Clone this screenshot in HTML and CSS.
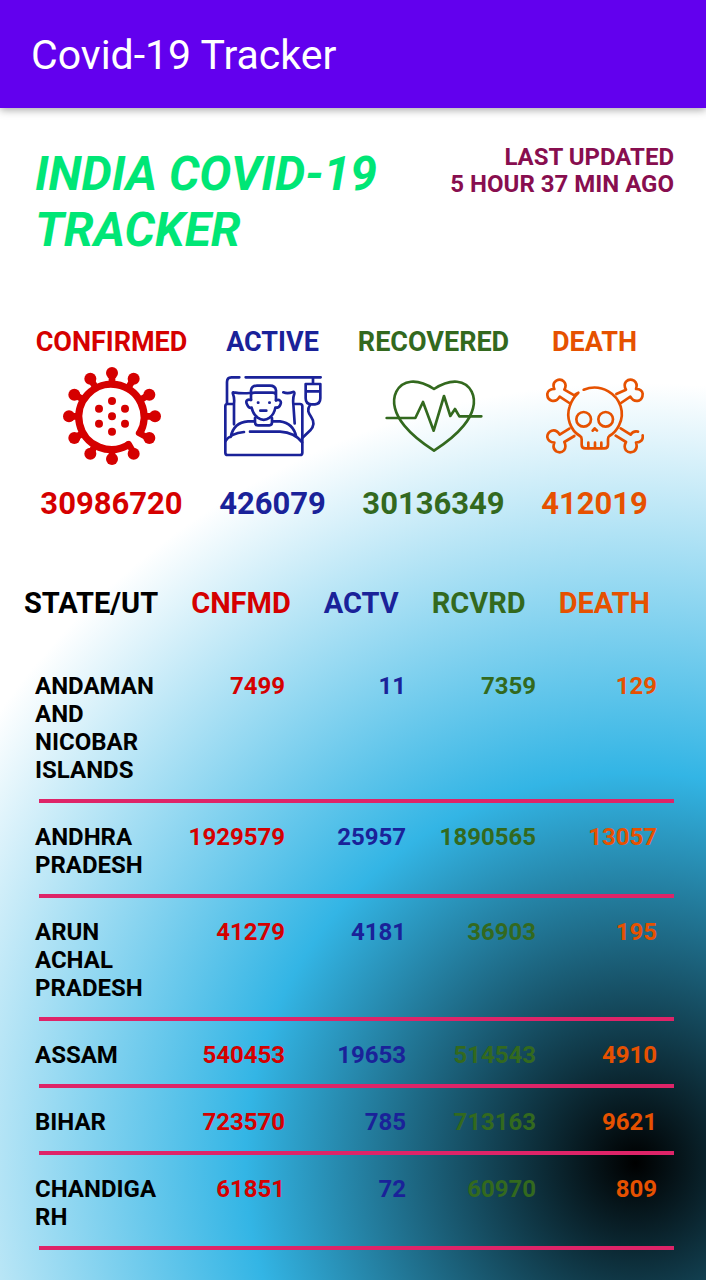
FILE: index.html
```html
<!DOCTYPE html>
<html lang="en">
<head>
<meta charset="utf-8">
<meta name="viewport" content="width=device-width, initial-scale=1">
<title>Covid-19 Tracker</title>
<link rel="stylesheet" href="styles.css">
</head>
<body>
<header class="app-bar">Covid-19 Tracker</header>
<main class="content">
  <div class="intro">
    <h1 class="title">INDIA COVID-19 TRACKER</h1>
    <p class="updated">LAST UPDATED<br>5 HOUR 37 MIN AGO</p>
  </div>

  <section class="stats">
    <div class="stat confirmed">
      <h2 class="stat-label">CONFIRMED</h2>
      <svg class="stat-icon" viewBox="39 36 294 294" aria-hidden="true">
        <g fill="currentColor">
          <circle cx="186" cy="54" r="18"/><circle cx="251" cy="71" r="18"/><circle cx="298" cy="119" r="18"/>
          <circle cx="315" cy="184" r="18"/><circle cx="298" cy="249" r="18"/><circle cx="251" cy="296" r="18"/>
          <circle cx="186" cy="312" r="18"/><circle cx="121" cy="296" r="18"/><circle cx="73" cy="249" r="18"/>
          <circle cx="57" cy="184" r="18"/><circle cx="73" cy="119" r="18"/><circle cx="121" cy="71" r="18"/>
          <circle cx="186" cy="138" r="12"/><circle cx="186" cy="184" r="12"/><circle cx="186" cy="230" r="12"/>
          <circle cx="147" cy="161" r="12"/><circle cx="225" cy="161" r="12"/>
          <circle cx="147" cy="206" r="12"/><circle cx="225" cy="206" r="12"/>
        </g>
        <g fill="none" stroke="currentColor">
          <path stroke-width="20" d="M186 60V90M248 76L235 98M293 122L272 134M308 184H280M186 308V278M124 291L137 269M79 246L100 234M64 184H92M79 122L100 134M124 76L137 98"/>
          <path stroke-width="22" d="M239 267A98 98 0 1 1 269 235"/>
          <path stroke-width="19" stroke-linecap="round" stroke-linejoin="round" d="M236 267L248 288M267 234L289 246"/>
        </g>
      </svg>
      <p class="stat-value">30986720</p>
    </div>
    <div class="stat active">
      <h2 class="stat-label">ACTIVE</h2>
      <svg class="stat-icon" viewBox="36 21 294 294" aria-hidden="true">
        <g fill="none" stroke="currentColor" stroke-width="8" stroke-linecap="round" stroke-linejoin="round">
          <path d="M82 52H58Q45 52 45 66V130M101 52H326M303 54V70"/>
          <path d="M62 132H46Q40 132 40 139V278Q40 285 47 285H264Q271 285 271 278V139Q271 132 264 132H249"/>
          <path d="M113 99Q88 101 65 97Q61 96 63 102Q68 114 66 131V193M214 97Q227 102 243 96Q248 95 247 101Q242 114 244 132L248 190"/>
          <path d="M117 99V91Q119 77 135 77H174Q190 77 192 91V121M117 99V120M117 104Q118 97 132 98H178Q191 97 192 105"/>
          <path d="M117 120C103 116 100 125 106 135Q110 145 119 143Q123 162 137 173Q155 186 173 173Q187 162 190 143Q201 144 205 134C210 123 202 117 192 121"/>
          <path d="M138 128H139M172 128H173M145 152H163M129 174V187Q129 196 138 196H172Q180 196 180 187V174"/>
          <path d="M128 184H108Q65 187 56 231M181 184H204Q244 189 253 231M40 244Q57 219 96 216M114 215H204Q249 218 270 247"/>
          <path d="M281 72H325V115Q325 132 309 133H297Q281 132 281 115ZM282 94H324M294 135C284 149 289 159 298 172C307 185 305 200 295 211L270 235"/>
        </g>
      </svg>
      <p class="stat-value">426079</p>
    </div>
    <div class="stat recovered">
      <h2 class="stat-label">RECOVERED</h2>
      <svg class="stat-icon" viewBox="33 21 294 294" aria-hidden="true">
        <g fill="none" stroke="currentColor" stroke-width="8" stroke-linecap="round" stroke-linejoin="round">
          <path d="M180 87C128 53 85 60 67 95C52 125 63 163 91 197Q121 234 180 272Q239 234 269 197C297 163 308 125 293 95C275 60 232 53 180 87Z"/>
          <path d="M38 174H124L147 126L179 212L210 108L229 168L243 147L256 169H322"/>
        </g>
      </svg>
      <p class="stat-value">30136349</p>
    </div>
    <div class="stat death">
      <h2 class="stat-label">DEATH</h2>
      <svg class="stat-icon" viewBox="33 21 294 294" aria-hidden="true">
        <g fill="none" stroke="currentColor" stroke-width="8" stroke-linecap="round" stroke-linejoin="round">
          <path d="M146 89Q185 74 220 94C257 115 271 160 252 196Q242 217 223 228Q219 231 219 238V254Q219 265 208 265H151Q140 265 140 254V238Q140 231 135 228C105 211 93 171 104 139Q111 116 130 98"/>
          <circle cx="146" cy="178" r="22"/><circle cx="212" cy="178" r="22"/>
          <path d="M173 212L179 205L186 212M160 248V264M180 248V264M199 248V264"/>
          <path d="M125 101L118 106L88 89Q96 75 87 65Q77 55 64 62Q51 70 58 87Q40 87 37 101Q36 117 50 122Q65 126 74 110L103 129"/>
          <path d="M244 102L273 89Q265 75 273 65Q283 55 297 62Q309 71 303 87Q321 87 323 101Q323 117 311 122Q295 126 286 110L258 129"/>
          <path d="M103 206L74 224Q65 208 50 212Q36 218 37 232Q40 247 58 248Q51 265 64 274Q77 281 87 271Q95 261 88 246L118 228"/>
          <path d="M257 205L287 224Q294 212 309 215M323 226Q326 246 303 248Q309 265 297 274Q283 281 273 271Q265 261 273 246L242 227"/>
        </g>
      </svg>
      <p class="stat-value">412019</p>
    </div>
  </section>

  <table class="states">
    <thead>
      <tr class="head-row">
        <th scope="col">STATE/UT</th>
        <th scope="col" class="confirmed">CNFMD</th>
        <th scope="col" class="active">ACTV</th>
        <th scope="col" class="recovered">RCVRD</th>
        <th scope="col" class="death">DEATH</th>
      </tr>
    </thead>
    <tbody>
      <tr class="state-row"><th scope="row">ANDAMAN AND NICOBAR ISLANDS</th><td class="confirmed">7499</td><td class="active">11</td><td class="recovered">7359</td><td class="death">129</td></tr>
      <tr class="state-row"><th scope="row">ANDHRA PRADESH</th><td class="confirmed">1929579</td><td class="active">25957</td><td class="recovered">1890565</td><td class="death">13057</td></tr>
      <tr class="state-row"><th scope="row">ARUN<wbr>ACHAL PRADESH</th><td class="confirmed">41279</td><td class="active">4181</td><td class="recovered">36903</td><td class="death">195</td></tr>
      <tr class="state-row"><th scope="row">ASSAM</th><td class="confirmed">540453</td><td class="active">19653</td><td class="recovered">514543</td><td class="death">4910</td></tr>
      <tr class="state-row"><th scope="row">BIHAR</th><td class="confirmed">723570</td><td class="active">785</td><td class="recovered">713163</td><td class="death">9621</td></tr>
      <tr class="state-row"><th scope="row">CHANDIGA<wbr>RH</th><td class="confirmed">61851</td><td class="active">72</td><td class="recovered">60970</td><td class="death">809</td></tr>
    </tbody>
  </table>
</main>
</body>
</html>
```
FILE: styles.css
```css
* {
  box-sizing: border-box;
}

body {
  display: flex;
  flex-direction: column;
  min-height: 100vh;
  margin: 0;
  font-family: Roboto, "Liberation Sans", sans-serif;
  font-weight: 700;
  color: #000;
}

h1,
h2,
p {
  margin: 0;
}

.app-bar {
  position: relative;
  padding: 31px 31px 29px;
  background: #6200ee;
  box-shadow: 0 2px 8px rgba(0, 0, 0, 0.35);
  color: #fff;
  font-size: 41px;
  font-weight: 400;
  line-height: 48px;
}

.content {
  flex: 1;
  padding: 36px 0 28px;
  background: radial-gradient(circle 780px at 90% 90%, #000 0, #33b5e5 50%, #fff 100%);
}

.intro {
  display: flex;
  justify-content: space-between;
  gap: 24px;
  padding: 0 32px 0 35px;
}

.title {
  flex: 0 1 372px;
  padding-top: 2px;
  color: #00e676;
  font-size: 48px;
  font-style: italic;
  line-height: 56px;
}

.updated {
  color: #880e4f;
  font-size: 24px;
  line-height: 27px;
  text-align: right;
  white-space: nowrap;
}

.confirmed {
  color: #d50000;
}

.active {
  color: #1a2299;
}

.recovered {
  color: #33691e;
}

.death {
  color: #e65100;
}

.stats {
  display: grid;
  grid-template-columns: repeat(4, 1fr);
  margin-top: 68px;
  padding: 0 31px;
}

.stat {
  display: flex;
  flex-direction: column;
  align-items: center;
}

.stat-label {
  font-size: 27px;
  line-height: 32px;
}

.stat-icon {
  width: 98px;
  height: 98px;
  margin: 9px 0 20px;
}

.stat-value {
  font-size: 31px;
  line-height: 38px;
}

.states {
  display: block;
  margin-top: 62px;
}

.states thead,
.states tbody {
  display: block;
}

.states th,
.states td {
  padding: 0;
}

.head-row {
  display: flex;
  gap: 33px;
  padding: 0 24px 31px;
  font-size: 29px;
  line-height: 36px;
}

.state-row {
  display: grid;
  grid-template-columns: 121fr 129fr 121fr 130fr 121fr 17fr;
  padding: 20px 32px 0 35px;
  font-size: 24px;
  line-height: 28px;
  text-align: right;
}

.state-row th {
  text-align: left;
}

.state-row::after {
  content: "";
  grid-column: 1 / -1;
  height: 4px;
  margin: 15px 0 0 4px;
  background: #de2468;
}
```
